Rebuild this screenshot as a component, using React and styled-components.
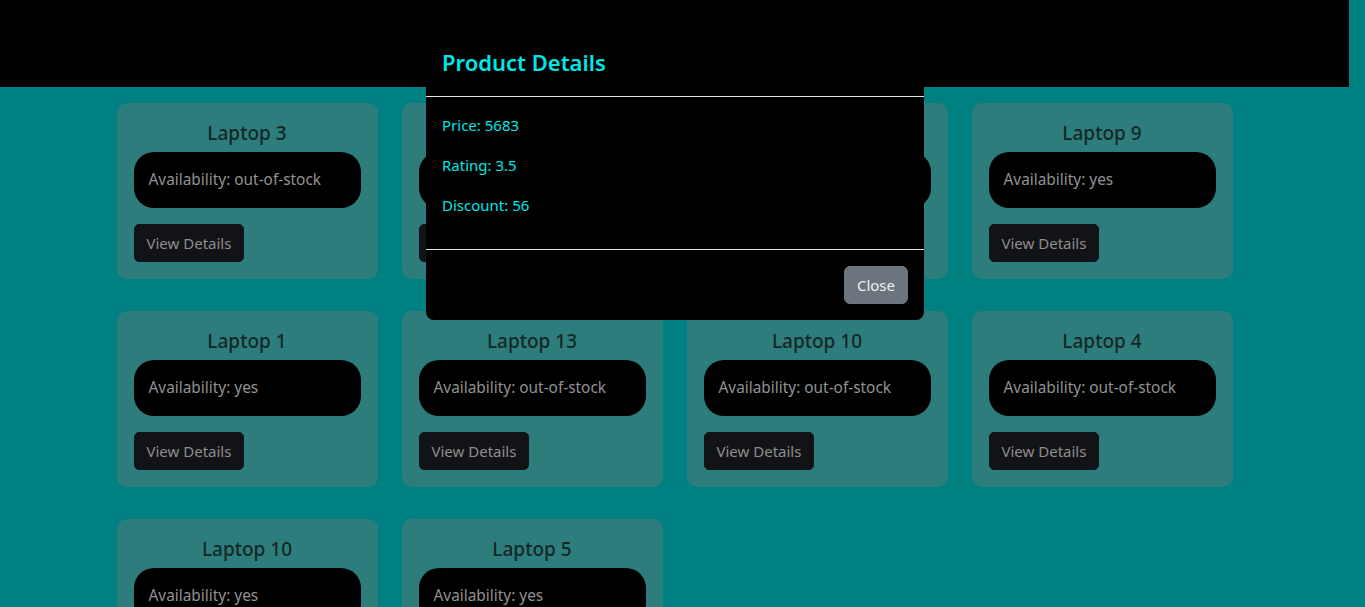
import React, { useState } from "react";
import styled, { createGlobalStyle } from "styled-components";

const GlobalStyle = createGlobalStyle`
  html, body {
    margin: 0;
    padding: 0;
    background-color: #008080;
    font-family: "Noto Sans", "Open Sans", sans-serif;
    overflow: hidden;
  }
`;

const Page = styled.div`
  width: calc(100% - 16px);
  min-height: 607px;
`;

const Header = styled.header`
  height: 87px;
  box-sizing: border-box;
  padding-top: 19px;
  background-color: #000;
  display: flex;
  align-items: flex-start;
  justify-content: center;
  h1 {
    margin: 0;
    font-size: 40px;
    line-height: 48px;
    font-weight: 600;
    color: #444;
  }
`;

const Grid = styled.main`
  width: 1116px;
  margin: 16px auto 0;
  display: grid;
  grid-template-columns: repeat(4, 261px);
  column-gap: 24px;
  row-gap: 32px;
`;

const Card = styled.div`
  background-color: #2e7d7d;
  border-radius: 10px;
  padding: 16px 17px 17px;
  display: flex;
  flex-direction: column;
  align-items: flex-start;
`;

const CardTitle = styled.h5`
  align-self: stretch;
  margin: 0 0 5px;
  font-size: 19px;
  font-weight: 500;
  line-height: 28px;
  text-align: center;
  color: #132727;
`;

const Pill = styled.div`
  align-self: stretch;
  background-color: #000;
  border-radius: 20px;
  padding: 16px 15px;
  font-size: 15.4px;
  line-height: 24px;
  color: #929292;
  margin-bottom: 16px;
`;

const DarkButton = styled.button`
  font-family: inherit;
  font-size: 15px;
  line-height: 24px;
  padding: 6px 12px;
  border: 1px solid #121316;
  border-radius: 5px;
  background-color: #121316;
  color: #8e8e8e;
  cursor: pointer;
`;

const Modal = styled.div`
  position: absolute;
  top: 28px;
  left: 426px;
  width: 498px;
  background-color: #000;
  border-radius: 8px;
  color: #00e6e6;
`;

const ModalHeader = styled.div`
  padding: 16px;
  border-bottom: 1px solid #e4e4e4;
  h4 {
    margin: 0;
    font-size: 22px;
    font-weight: 600;
    line-height: 36px;
  }
`;

const ModalBody = styled.div`
  padding: 16px;
  p {
    margin: 0 0 16px;
    font-size: 15px;
    line-height: 24px;
  }
`;

const ModalFooter = styled.div`
  border-top: 1px solid #e4e4e4;
  padding: 16px;
  display: flex;
  justify-content: flex-end;
`;

const CloseButton = styled.button`
  font-family: inherit;
  font-size: 15px;
  line-height: 24px;
  padding: 6px 12px;
  border: 1px solid #6c757d;
  border-radius: 6px;
  background-color: #6c757d;
  color: #f2f2f2;
  cursor: pointer;
`;

const products = [
  { name: "Laptop 3", availability: "out-of-stock" },
  { name: "Laptop 7", availability: "yes" },
  { name: "Laptop 2", availability: "out-of-stock" },
  { name: "Laptop 9", availability: "yes" },
  { name: "Laptop 1", availability: "yes" },
  { name: "Laptop 13", availability: "out-of-stock" },
  { name: "Laptop 10", availability: "out-of-stock" },
  { name: "Laptop 4", availability: "out-of-stock" },
  { name: "Laptop 10", availability: "yes" },
  { name: "Laptop 5", availability: "yes" },
];

export default function App() {
  const [open, setOpen] = useState(true);

  return (
    <Page>
      <GlobalStyle />
      <Header>
        <h1>E-Commerce Outlet</h1>
      </Header>
      <Grid>
        {products.map((p, i) => (
          <Card key={i}>
            <CardTitle>{p.name}</CardTitle>
            <Pill>Availability: {p.availability}</Pill>
            <DarkButton onClick={() => setOpen(true)}>View Details</DarkButton>
          </Card>
        ))}
      </Grid>
      {open && (
        <Modal>
          <ModalHeader>
            <h4>Product Details</h4>
          </ModalHeader>
          <ModalBody>
            <p>Price: 5683</p>
            <p>Rating: 3.5</p>
            <p>Discount: 56</p>
          </ModalBody>
          <ModalFooter>
            <CloseButton onClick={() => setOpen(false)}>Close</CloseButton>
          </ModalFooter>
        </Modal>
      )}
    </Page>
  );
}
